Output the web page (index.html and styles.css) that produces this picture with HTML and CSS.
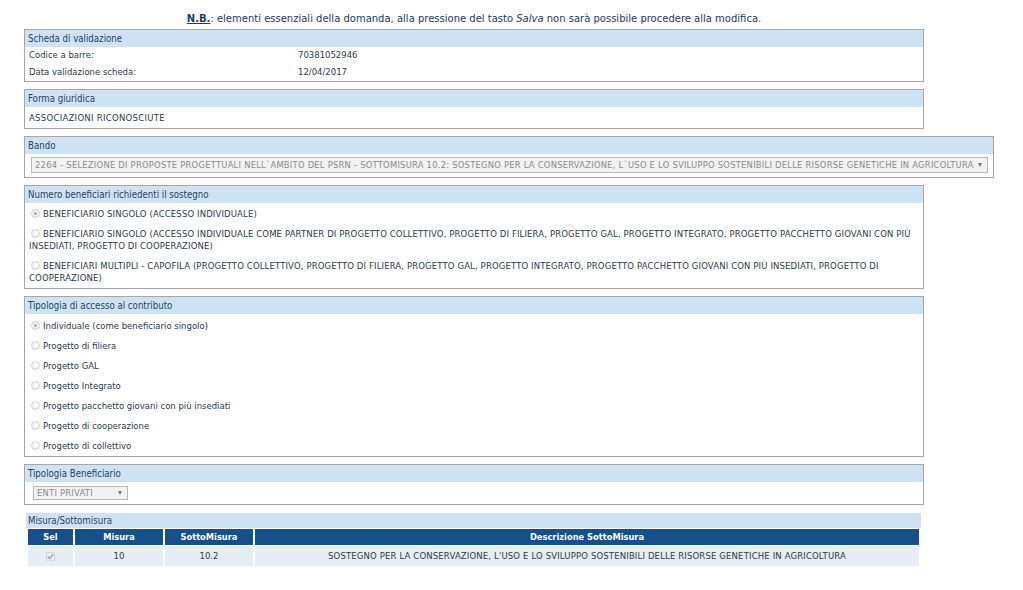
FILE: index.html
```html
<!DOCTYPE html>
<html lang="it">
<head>
<meta charset="utf-8">
<title>Scheda</title>
<link rel="stylesheet" href="styles.css">
</head>
<body>
<div class="page">
  <p class="note"><span class="nb">N.B.</span>: elementi essenziali della domanda, alla pressione del tasto <i>Salva</i> non sarà possibile procedere alla modifica.</p>

  <section class="box">
    <div class="box-head">Scheda di validazione</div>
    <div class="box-body">
      <div class="kv"><span class="k">Codice a barre:</span><span class="v">70381052946</span></div>
      <div class="kv"><span class="k">Data validazione scheda:</span><span class="v">12/04/2017</span></div>
    </div>
  </section>

  <section class="box">
    <div class="box-head">Forma giuridica</div>
    <div class="box-body plain caps">ASSOCIAZIONI RICONOSCIUTE</div>
  </section>

  <section class="box wide">
    <div class="box-head">Bando</div>
    <div class="box-body sel-wrap">
      <div class="select bando"><span class="sel-text">2264 - SELEZIONE DI PROPOSTE PROGETTUALI NELL`AMBITO DEL PSRN - SOTTOMISURA 10.2: SOSTEGNO PER LA CONSERVAZIONE, L`USO E LO SVILUPPO SOSTENIBILI DELLE RISORSE GENETICHE IN AGRICOLTURA</span><span class="arrow"></span></div>
    </div>
  </section>

  <section class="box">
    <div class="box-head">Numero beneficiari richiedenti il sostegno</div>
    <div class="box-body opts">
      <div class="opt"><span class="radio on"></span>BENEFICIARIO SINGOLO (ACCESSO INDIVIDUALE)</div>
      <div class="opt"><span class="radio"></span>BENEFICIARIO SINGOLO (ACCESSO INDIVIDUALE COME PARTNER DI PROGETTO COLLETTIVO, PROGETTO DI FILIERA, PROGETTO GAL, PROGETTO INTEGRATO, PROGETTO PACCHETTO GIOVANI CON PIÙ INSEDIATI, PROGETTO DI COOPERAZIONE)</div>
      <div class="opt"><span class="radio"></span>BENEFICIARI MULTIPLI - CAPOFILA (PROGETTO COLLETTIVO, PROGETTO DI FILIERA, PROGETTO GAL, PROGETTO INTEGRATO, PROGETTO PACCHETTO GIOVANI CON PIÙ INSEDIATI, PROGETTO DI COOPERAZIONE)</div>
    </div>
  </section>

  <section class="box">
    <div class="box-head">Tipologia di accesso al contributo</div>
    <div class="box-body list">
      <div class="item"><span class="radio on"></span>Individuale (come beneficiario singolo)</div>
      <div class="item"><span class="radio"></span>Progetto di filiera</div>
      <div class="item"><span class="radio"></span>Progetto GAL</div>
      <div class="item"><span class="radio"></span>Progetto Integrato</div>
      <div class="item"><span class="radio"></span>Progetto pacchetto giovani con più insediati</div>
      <div class="item"><span class="radio"></span>Progetto di cooperazione</div>
      <div class="item"><span class="radio"></span>Progetto di collettivo</div>
    </div>
  </section>

  <section class="box">
    <div class="box-head">Tipologia Beneficiario</div>
    <div class="box-body sel-wrap small">
      <div class="select enti"><span class="sel-text">ENTI PRIVATI</span><span class="arrow"></span></div>
    </div>
  </section>

  <section class="misura">
    <div class="misura-head">Misura/Sottomisura</div>
    <table class="grid">
      <thead>
        <tr><th class="c-sel">Sel</th><th class="c-mis">Misura</th><th class="c-sot">SottoMisura</th><th>Descrizione SottoMisura</th></tr>
      </thead>
      <tbody>
        <tr><td><span class="check"><svg viewBox="0 0 8 8" width="7" height="7"><path d="M1 4.2 L3 6.2 L7 1.5" fill="none" stroke="#9a9a9a" stroke-width="1.5"/></svg></span></td><td>10</td><td>10.2</td><td class="desc">SOSTEGNO PER LA CONSERVAZIONE, L'USO E LO SVILUPPO SOSTENIBILI DELLE RISORSE GENETICHE IN AGRICOLTURA</td></tr>
      </tbody>
    </table>
  </section>
</div>
</body>
</html>
```

FILE: styles.css
```css
html, body {
  margin: 0;
  padding: 0;
  background: #ffffff;
}
body {
  font-family: "DejaVu Sans", Verdana, sans-serif;
  font-size: 8.5px;
  color: #2c3a4a;
}
.page {
  padding: 12px 0 0 24px;
}
.note {
  width: 900px;
  margin: 0 0 4px 0;
  text-align: center;
  font-size: 10px;
  line-height: 13px;
  color: #233a5c;
}
.nb {
  font-weight: bold;
  text-decoration: underline;
}
.caps {
  letter-spacing: 0.28px;
}
.box {
  width: 898px;
  border: 1px solid #a6a6a6;
  margin-bottom: 7px;
}
.box.wide {
  width: 968px;
}
.box-head {
  height: 17px;
  line-height: 17px;
  background: #cfe2f3;
  padding-left: 3px;
  font-family: "DejaVu Sans Condensed", "DejaVu Sans", sans-serif;
  font-stretch: condensed;
  font-size: 9.6px;
  color: #1f4267;
}
.kv {
  display: flex;
  height: 17px;
  line-height: 17px;
  padding-left: 4px;
}
.k {
  width: 269px;
}
.plain {
  padding: 4px 4px 3px;
  line-height: 14px;
}
.sel-wrap {
  padding: 3px 4px 4px 6px;
}
.sel-wrap.small {
  padding: 4px 0 4px 8px;
}
.select {
  display: flex;
  align-items: center;
  height: 14px;
  border: 1px solid #b8b8b8;
  background: #f2f2f2;
  color: #8a8a8a;
  padding-left: 3px;
  box-sizing: content-box;
}
.select.bando {
  width: 952px;
}
.select.enti {
  width: 90px;
  height: 12px;
}
.sel-text {
  flex: 1;
  white-space: nowrap;
  overflow: hidden;
  font-size: 8.4px;
  letter-spacing: 0.24px;
}
.arrow {
  flex: none;
  width: 0;
  height: 0;
  border-left: 2.5px solid transparent;
  border-right: 2.5px solid transparent;
  border-top: 4px solid #777;
  margin: 0 5px 0 3px;
}
.opts {
  padding-top: 1px;
  letter-spacing: 0.13px;
}
.opt {
  padding: 4px 2px 4px 4px;
  line-height: 12px;
}
.list {
  padding-top: 2px;
}
.item {
  height: 20px;
  line-height: 20px;
  padding-left: 6px;
}
.radio {
  display: inline-block;
  width: 9px;
  height: 9px;
  border-radius: 50%;
  border: 1px solid #d0d0d0;
  background: radial-gradient(circle at 50% 40%, #ffffff 0%, #e6e6e6 100%);
  vertical-align: -1px;
  margin-right: 3px;
  box-sizing: border-box;
  position: relative;
}
.opt .radio {
  margin-left: 2px;
}
.radio.on::after {
  content: "";
  position: absolute;
  left: 2px;
  top: 2px;
  width: 3px;
  height: 3px;
  border-radius: 50%;
  background: #a8a8a8;
}
.misura {
  width: 895px;
  margin-left: 2px;
  margin-top: 8px;
}
.misura-head {
  height: 16px;
  line-height: 16px;
  background: #cfe2f3;
  padding-left: 2px;
  font-family: "DejaVu Sans Condensed", "DejaVu Sans", sans-serif;
  font-stretch: condensed;
  font-size: 9.6px;
  color: #1f4267;
}
.grid {
  width: 895px;
  border-collapse: separate;
  border-spacing: 2px 1px;
  margin: -1px 0 0 0;
  background: #ffffff;
}
.grid th {
  background: #174f88;
  color: #ffffff;
  font-weight: bold;
  height: 16px;
  padding: 0;
  font-size: 8.3px;
}
.grid td {
  background: #e6edf5;
  height: 20px;
  padding: 0;
  text-align: center;
}
.grid td.desc {
  letter-spacing: 0.15px;
}
.c-sel { width: 45px; }
.c-mis { width: 88px; }
.c-sot { width: 88px; }
.check {
  display: inline-block;
  width: 9px;
  height: 9px;
  background: #eeeeee;
  border: 1px solid #d5d5d5;
  box-sizing: border-box;
  vertical-align: middle;
  line-height: 0;
}
.check svg {
  width: 7px;
  height: 7px;
}
```
